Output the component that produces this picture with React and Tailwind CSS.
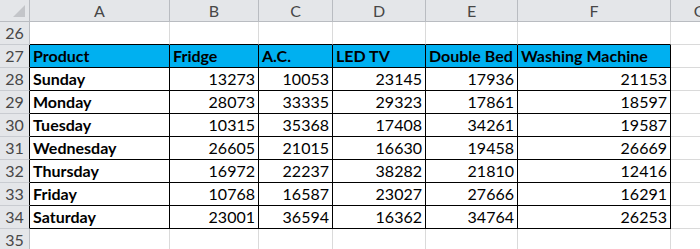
import React from "react";

const columns = [
  { key: "A", width: "w-[140px]" },
  { key: "B", width: "w-[89px]" },
  { key: "C", width: "w-[74px]" },
  { key: "D", width: "w-[93px]" },
  { key: "E", width: "w-[92px]" },
  { key: "F", width: "w-[153px]" },
  { key: "G", width: "w-[58px]" },
];

const headers = ["Product", "Fridge", "A.C.", "LED TV", "Double Bed", "Washing Machine"];

const sales = [
  ["Sunday", 13273, 10053, 23145, 17936, 21153],
  ["Monday", 28073, 33335, 29323, 17861, 18597],
  ["Tuesday", 10315, 35368, 17408, 34261, 19587],
  ["Wednesday", 26605, 21015, 16630, 19458, 26669],
  ["Thursday", 16972, 22237, 38282, 21810, 12416],
  ["Friday", 10768, 16587, 23027, 27666, 16291],
  ["Saturday", 23001, 36594, 16362, 34764, 26253],
];

const CornerCell = () => (
  <div className="w-[30px] h-[22px] shrink-0 bg-[#e4e6e9] border-r border-b border-[#b9bcc1] relative">
    <svg className="absolute right-[4px] bottom-[4px]" width="12" height="12" viewBox="0 0 12 12">
      <polygon points="12,0 12,12 0,12" fill="#c3c5c9" />
    </svg>
  </div>
);

const RowNumber = ({ n, inTable }) => (
  <div
    className={`w-[30px] h-full shrink-0 bg-[#e4e6e9] border-b border-[#c9ccd1] flex items-end justify-center pb-[2px] text-[#474747] ${
      inTable ? "border-r border-r-black" : "border-r border-r-[#b9bcc1]"
    }`}
  >
    {n}
  </div>
);

const Cell = ({ width, children, className = "" }) => (
  <div className={`${width} h-full shrink-0 flex items-end px-[3px] pb-[2px] whitespace-nowrap overflow-hidden ${className}`}>
    {children}
  </div>
);

const App = () => {
  return (
    <div
      className="w-[700px] h-[249px] overflow-hidden bg-white text-[16px] leading-[19px] text-black"
      style={{ fontFamily: "Lato, 'Open Sans', sans-serif" }}
    >
      {/* column letters */}
      <div className="flex h-[22px]">
        <CornerCell />
        {columns.map((c) => (
          <div
            key={c.key}
            className={`${c.width} h-full shrink-0 bg-[#e4e6e9] border-r border-b border-[#b9bcc1] flex items-end justify-center pb-[1px] text-[#474747] overflow-hidden`}
          >
            {c.key}
          </div>
        ))}
      </div>

      {/* row 26 */}
      <div className="flex h-[23px]">
        <RowNumber n={26} />
        {columns.map((c) => (
          <Cell
            key={c.key}
            width={c.width}
            className={c.key === "G" ? "border-r border-b border-[#dadada]" : "border-r border-r-[#dadada] border-b border-b-black"}
          />
        ))}
      </div>

      {/* row 27 header */}
      <div className="flex h-[23px]">
        <RowNumber n={27} inTable />
        {headers.map((h, i) => (
          <Cell key={h} width={columns[i].width} className="bg-[#00b0f0] font-bold border-r border-b border-black">
            {h}
          </Cell>
        ))}
        <Cell width={columns[6].width} className="border-r border-b border-[#dadada]" />
      </div>

      {/* rows 28-34 */}
      {sales.map((row, r) => (
        <div key={row[0]} className="flex h-[23px]">
          <RowNumber n={28 + r} inTable />
          {row.map((v, i) => (
            <Cell
              key={i}
              width={columns[i].width}
              className={`border-r border-b border-black ${i === 0 ? "font-bold" : "justify-end"}`}
            >
              {v}
            </Cell>
          ))}
          <Cell width={columns[6].width} className="border-r border-b border-[#dadada]" />
        </div>
      ))}

      {/* row 35 */}
      <div className="flex h-[23px]">
        <RowNumber n={35} />
        {columns.map((c) => (
          <Cell key={c.key} width={c.width} className="border-r border-b border-[#dadada]" />
        ))}
      </div>
    </div>
  );
};

export default App;
